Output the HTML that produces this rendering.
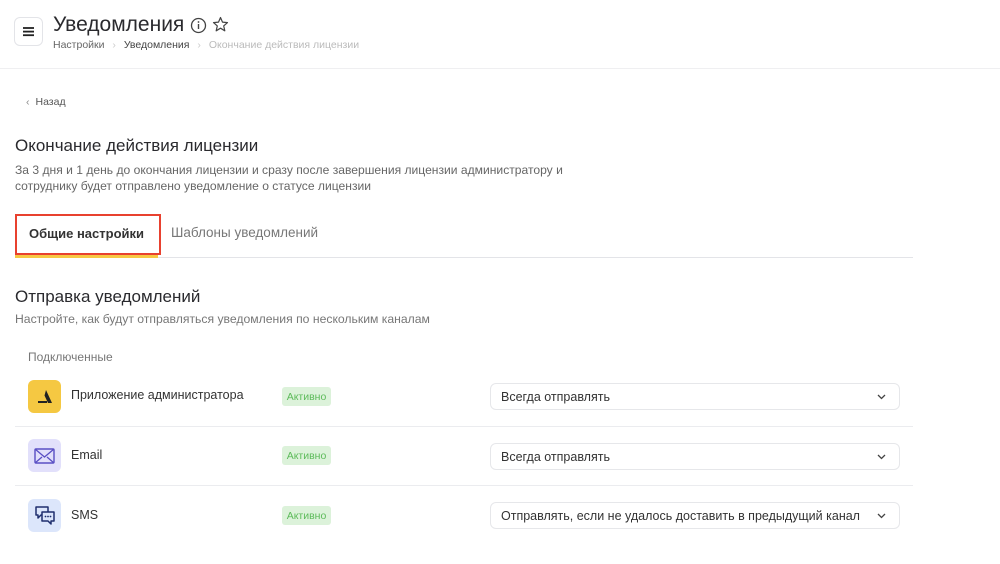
<!DOCTYPE html>
<html><head><meta charset="utf-8"><style>
*{margin:0;padding:0;box-sizing:border-box}
body{width:1000px;height:564px;background:#fff;font-family:"Liberation Sans","Noto Sans CJK SC",sans-serif;color:#2b2d33;position:relative;overflow:hidden}
.a{position:absolute;white-space:nowrap}
.sel{position:absolute;left:490px;width:410px;height:27px;border:1px solid #e6e7ea;border-radius:6px;font-size:12.5px;color:#333;padding:6px 0 0 10px}
.sel svg{position:absolute;right:13px;top:10px}
.badge{position:absolute;left:282px;width:49px;height:19px;background:#dcf2da;color:#5dbb5a;font-size:10.5px;border-radius:3px;display:flex;align-items:center;justify-content:center}
.ic{position:absolute;left:28px;width:33px;height:33px;border-radius:6px}
.nm{position:absolute;left:71px;font-size:12.5px;color:#333}
.ln{position:absolute;left:15px;width:898px;height:1px;background:#ebecef}
</style></head><body>
<div class="a" style="left:0;top:68px;width:1000px;height:1px;background:#efeff1"></div>
<div class="a" style="left:14px;top:17px;width:29px;height:29px;border:1px solid #e3e4e8;border-radius:6px"></div>
<div class="a" style="left:23px;top:27px;width:11px;height:2px;background:#222;box-shadow:0 4px 0 #222,0 8px 0 #222;transform:scale(1,0.9)"></div>
<div class="a" style="left:53px;top:13px;font-size:21px;color:#2a2a2e">Уведомления</div>
<svg class="a" style="left:190px;top:17px" width="17" height="17"><circle cx="8.5" cy="8.5" r="7" fill="none" stroke="#444" stroke-width="1.3"/><rect x="7.8" y="7" width="1.4" height="5" fill="#444"/><circle cx="8.5" cy="5" r="0.9" fill="#444"/></svg>
<svg class="a" style="left:212px;top:16px" width="17" height="17"><path d="M8.5 1.5l2 4.6 5 .5-3.8 3.3 1.1 4.9-4.3-2.6-4.3 2.6 1.1-4.9L1.5 6.6l5-.5z" fill="none" stroke="#444" stroke-width="1.2" stroke-linejoin="round"/></svg>
<div class="a" style="left:53px;top:39px;font-size:10.5px;color:#666">Настройки <span style="color:#ccc;margin:0 5px">›</span> <span style="color:#444">Уведомления</span> <span style="color:#ccc;margin:0 5px">›</span> <span style="color:#bbb">Окончание действия лицензии</span></div>
<div class="a" style="left:26px;top:96px;font-size:10.5px;color:#555"><span style="color:#888;margin-right:6px">‹</span>Назад</div>
<div class="a" style="left:15px;top:136px;font-size:17px;color:#2a2a2e">Окончание действия лицензии</div>
<div class="a" style="left:15px;top:162px;font-size:12.1px;color:#666;line-height:16px">За 3 дня и 1 день до окончания лицензии и сразу после завершения лицензии администратору и<br>сотруднику будет отправлено уведомление о статусе лицензии</div>
<div class="a" style="left:15px;top:257px;width:898px;height:1px;background:#e3e4e8"></div>
<div class="a" style="left:15px;top:254px;width:143px;height:4px;background:#f7c843"></div>
<div class="a" style="left:15px;top:214px;width:146px;height:41px;border:2.5px solid #e8412f"></div>
<div class="a" style="left:29px;top:226px;font-size:13px;font-weight:bold;color:#333">Общие настройки</div>
<div class="a" style="left:171px;top:225px;font-size:13.5px;color:#777">Шаблоны уведомлений</div>
<div class="a" style="left:15px;top:287px;font-size:17px;color:#2a2a2e">Отправка уведомлений</div>
<div class="a" style="left:15px;top:312px;font-size:12.2px;color:#777">Настройте, как будут отправляться уведомления по нескольким каналам</div>
<div class="a" style="left:28px;top:350px;font-size:12px;color:#777">Подключенные</div>

<div class="ic" style="top:380px;background:#f5c842"></div>
<svg class="a" style="left:35px;top:387px" width="20" height="20"><path d="M11 3L17 16H13L9.5 8.5z M3 16h9v-2H3z" fill="#222"/></svg>
<div class="nm" style="top:388px">Приложение администратора</div>
<div class="badge" style="top:387px">Активно</div>
<div class="sel" style="top:383px">Всегда отправлять<svg width="9" height="6"><path d="M1 1l3.5 3.5L8 1" fill="none" stroke="#444" stroke-width="1.3"/></svg></div>
<div class="ln" style="top:426px"></div>

<div class="ic" style="top:439px;background:#e2e0fb"></div>
<svg class="a" style="left:34px;top:448px" width="21" height="16"><rect x="1" y="1" width="19" height="14" rx="1" fill="none" stroke="#5a4fc4" stroke-width="1.4"/><path d="M1 1l9.5 8L20 1M1 15l7-6M20 15l-7-6" fill="none" stroke="#5a4fc4" stroke-width="1.3"/></svg>
<div class="nm" style="top:448px">Email</div>
<div class="badge" style="top:446px">Активно</div>
<div class="sel" style="top:443px">Всегда отправлять<svg width="9" height="6"><path d="M1 1l3.5 3.5L8 1" fill="none" stroke="#444" stroke-width="1.3"/></svg></div>
<div class="ln" style="top:485px"></div>

<div class="ic" style="top:499px;background:#dce6fb"></div>
<svg class="a" style="left:34px;top:505px" width="22" height="21"><path d="M2 2h12v8H7l-3 3v-3H2z" fill="none" stroke="#1f2f6e" stroke-width="1.5" stroke-linejoin="round"/><path d="M8 7h12v9h-3v3l-3-3H8z" fill="#dce6fb" stroke="#1f2f6e" stroke-width="1.5" stroke-linejoin="round"/><circle cx="11.5" cy="11.5" r=".9" fill="#1f2f6e"/><circle cx="14" cy="11.5" r=".9" fill="#1f2f6e"/><circle cx="16.5" cy="11.5" r=".9" fill="#1f2f6e"/></svg>
<div class="nm" style="top:508px">SMS</div>
<div class="badge" style="top:506px">Активно</div>
<div class="sel" style="top:502px">Отправлять, если не удалось доставить в предыдущий канал<svg width="9" height="6"><path d="M1 1l3.5 3.5L8 1" fill="none" stroke="#444" stroke-width="1.3"/></svg></div>
</body></html>
